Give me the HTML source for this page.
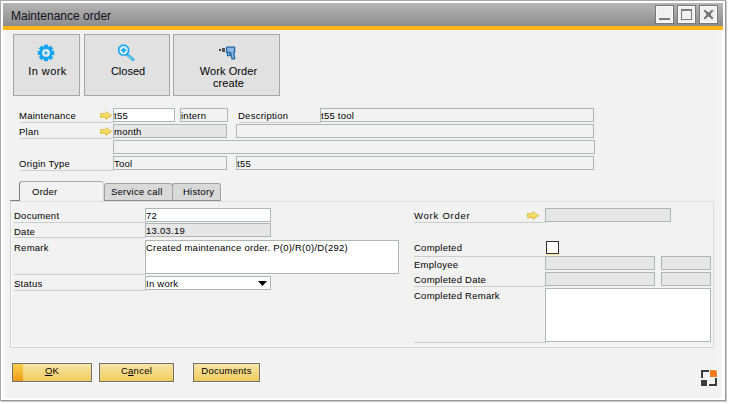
<!DOCTYPE html>
<html><head><meta charset="utf-8">
<style>
*{margin:0;padding:0;box-sizing:border-box}
html,body{width:729px;height:404px;overflow:hidden;background:#fff}
body{position:relative;font-family:"Liberation Sans",sans-serif;font-size:9.5px;letter-spacing:0.25px;color:#000}
.a{position:absolute}
#frame{left:0;top:0;width:726px;height:401px;border-left:1px solid #a8a8a8;border-top:1px solid #a8a8a8;border-right:1px solid #9a9a9a;border-bottom:1px solid #9a9a9a;box-shadow:1px 1px 0 #c8c8c8}
#title{left:3px;top:3px;width:720px;height:23px;background:linear-gradient(#b5b5b5,#8d8d8d)}
#title span{position:absolute;left:8px;top:6px;font-size:12px;letter-spacing:0;color:#101020}
#orange{left:3px;top:26px;width:720px;height:4px;background:#fdb515}
#content{left:3px;top:30px;width:719px;height:368px;background:#f2f2f2;box-shadow:inset 1px 0 #fafafa,inset 4px 0 #f5f5f5,inset -3px 0 #f4f4f4}
.wb{width:19px;height:19px;border:1px solid #787878;background:#f0f0f0;box-shadow:inset 0 0 0 1px #fafafa}
.tb{border:1px solid #a6a6a6;background:#e1e1e1;font-size:11px;text-align:center;color:#111}
.lbl{height:15px;line-height:16px;border-bottom:1px solid #cdcdcd;white-space:nowrap;text-indent:-1px}
.inp{height:14px;border:1px solid #b0b5b5;background:#f2f2f2;line-height:14px;padding-left:0;white-space:nowrap;overflow:hidden}
.w{background:#fff}
.g{background:#e6e6e6}
.tab{border:1px solid #a0a0a0;border-bottom:none;border-radius:3px 3px 0 0;text-align:center;line-height:14px}
.btn{height:19px;border:1px solid #6e6e6e;box-shadow:0 0 0 1px #fafafa;background:linear-gradient(#f7e4a8,#f1cd5c);text-align:center;line-height:14px}
</style></head><body>
<div class="a" id="frame"></div>
<div class="a" id="title"><span>Maintenance order</span></div>
<div class="a" id="orange"></div>
<div class="a" id="content"></div>

<!-- window buttons -->
<div class="a wb" style="left:655px;top:5px"></div>
<div class="a wb" style="left:677px;top:5px"></div>
<div class="a wb" style="left:699px;top:5px"></div>
<div class="a" style="left:659px;top:18px;width:11px;height:2px;background:#7a7a7a"></div>
<div class="a" style="left:681px;top:9px;width:11px;height:11px;border:1px solid #7a7a7a;border-top-width:2px"></div>
<svg class="a" style="left:703px;top:9px" width="11" height="11" viewBox="0 0 11 11"><path d="M1.8 1.8L9.2 9.2M9.2 1.8L1.8 9.2" stroke="#767676" stroke-width="2" stroke-linecap="round"/><rect x="3.2" y="3.2" width="4.6" height="4.6" fill="#767676"/></svg>

<!-- toolbar buttons -->
<div class="a tb" style="left:13px;top:34px;width:67px;height:62px"></div>
<div class="a tb" style="left:84px;top:34px;width:86px;height:62px"></div>
<div class="a tb" style="left:173px;top:34px;width:107px;height:62px"></div>
<div class="a" style="left:14px;top:65px;width:67px;text-align:center;font-size:11px;letter-spacing:0.4px">In work</div>
<div class="a" style="left:85px;top:65px;width:86px;text-align:center;font-size:11px;letter-spacing:0">Closed</div>
<div class="a" style="left:175px;top:65px;width:107px;text-align:center;font-size:11px;line-height:12px;letter-spacing:0.1px">Work Order<br>create</div>


<!-- icons -->
<svg class="a" style="left:37px;top:44px" width="18" height="18" viewBox="0 0 18 18">
<g fill="#12a5f4" transform="translate(9 8.9)">
<circle r="6.4"/>
<rect x="-2.1" y="-8.2" width="4.2" height="16.4"/>
<rect x="-2.1" y="-8.2" width="4.2" height="16.4" transform="rotate(45)"/>
<rect x="-2.1" y="-8.2" width="4.2" height="16.4" transform="rotate(90)"/>
<rect x="-2.1" y="-8.2" width="4.2" height="16.4" transform="rotate(135)"/>
</g>
<circle cx="9" cy="8.9" r="3.9" fill="#e3eaee"/>
<path d="M7.8 6.8L11 8.9L7.8 11Z" fill="#12a5f4"/>
</svg>
<svg class="a" style="left:116px;top:43px" width="20" height="20" viewBox="0 0 20 20">
<path d="M11.6 11.8L17 16.6" stroke="#2eb0f0" stroke-width="3" stroke-linecap="round"/>
<path d="M12.2 12.6L16.4 16.2" stroke="#c8ebfc" stroke-width="0.9"/>
<path d="M5.6 2.4H9.6L12.4 5.2V9.2L9.6 12H5.6L2.8 9.2V5.2Z" fill="#fff" stroke="#18a8f0" stroke-width="1.7" stroke-linejoin="round"/>
<path d="M7.6 4.4V10M4.8 7.2H10.4" stroke="#18a8f0" stroke-width="2"/>
</svg>
<svg class="a" style="left:218px;top:46px" width="20" height="15" viewBox="0 0 20 15">
<rect x="1" y="3" width="2" height="2" fill="#444"/>
<rect x="4" y="2" width="3" height="4" fill="#555"/>
<path d="M9.5 6.5V9.5H12V6.5" fill="none" stroke="#1c67a6" stroke-width="1.3"/><path d="M8.6 1.2H16.6V6.5H15.6L16.6 11.7V12.8H14L12.6 6.5H8.6Z" fill="#8fb8e4" stroke="#1c67a6" stroke-width="1.3" stroke-linejoin="round"/>
</svg>

<!-- header form -->
<div class="a lbl" style="left:20px;top:108px;width:94px">Maintenance</div>
<div class="a lbl" style="left:20px;top:124px;width:94px">Plan</div>
<div class="a lbl" style="left:20px;top:156px;width:94px">Origin Type</div>
<div class="a inp w" style="left:113px;top:108px;width:62px">t55</div>
<div class="a inp" style="left:180px;top:108px;width:48px">intern</div>
<div class="a lbl" style="left:239px;top:108px;width:82px">Description</div>
<div class="a inp" style="left:320px;top:108px;width:274px">t55 tool</div>
<div class="a inp g" style="left:113px;top:124px;width:114px">month</div>
<div class="a inp" style="left:236px;top:124px;width:358px"></div>
<div class="a inp" style="left:113px;top:140px;width:482px"></div>
<div class="a inp" style="left:113px;top:156px;width:114px">Tool</div>
<div class="a inp" style="left:236px;top:156px;width:358px">t55</div>

<svg class="a" style="left:99px;top:111px" width="14" height="10" viewBox="0 0 14 10"><defs><linearGradient id="ag1" x1="0" y1="0" x2="0" y2="1"><stop offset="0" stop-color="#f7eaa0"/><stop offset="1" stop-color="#f0d030"/></linearGradient></defs><path d="M1.5 2.6H7V0.6L12.6 4.5L7 8.4V6.4H1.5Z" fill="url(#ag1)" stroke="#dcc040" stroke-width="0.9" stroke-linejoin="round"/></svg>
<svg class="a" style="left:99px;top:127px" width="14" height="10" viewBox="0 0 14 10"><defs><linearGradient id="ag2" x1="0" y1="0" x2="0" y2="1"><stop offset="0" stop-color="#f7eaa0"/><stop offset="1" stop-color="#f0d030"/></linearGradient></defs><path d="M1.5 2.6H7V0.6L12.6 4.5L7 8.4V6.4H1.5Z" fill="url(#ag2)" stroke="#dcc040" stroke-width="0.9" stroke-linejoin="round"/></svg>
<svg class="a" style="left:526px;top:211px" width="14" height="10" viewBox="0 0 14 10"><defs><linearGradient id="ag3" x1="0" y1="0" x2="0" y2="1"><stop offset="0" stop-color="#f7eaa0"/><stop offset="1" stop-color="#f0d030"/></linearGradient></defs><path d="M1.5 2.6H7V0.6L12.6 4.5L7 8.4V6.4H1.5Z" fill="url(#ag3)" stroke="#dcc040" stroke-width="0.9" stroke-linejoin="round"/></svg>
<!-- tabs -->
<div class="a" style="left:10px;top:201px;width:704px;height:147px;border:1px solid #dcdcdc;border-left-color:#d2d2d2;border-bottom-color:#d2d2d2;box-shadow:inset 1px 0 #fafafa,inset 0 -1px #fafafa"></div>
<div class="a" style="left:10px;top:200px;width:10px;height:1px;background:#7c7c7c"></div>
<div class="a tab" style="left:104px;top:183px;width:69px;height:18px;background:#d9d9d9;border-bottom:1px solid #8c8c8c;text-align:left;padding-left:6px;line-height:15px">Service call</div>
<div class="a tab" style="left:172px;top:183px;width:49px;height:18px;background:#d9d9d9;border-bottom:1px solid #8c8c8c;text-align:left;padding-left:10px;line-height:15px">History</div>
<div class="a tab" style="left:19px;top:181px;width:85px;height:20px;background:#f2f2f2;border-left-color:#7c7c7c;border-right-color:#d4d4d4;border-top-color:#a8a8a8;text-align:left;padding-left:12px;line-height:20px">Order</div>
<!-- order tab left -->
<div class="a lbl" style="text-indent:0;left:14px;top:208px;width:132px">Document</div>
<div class="a lbl" style="text-indent:0;left:14px;top:224px;width:132px;height:14px">Date</div>
<div class="a lbl" style="text-indent:0;left:14px;top:240px;width:132px;height:35px">Remark</div>
<div class="a lbl" style="text-indent:0;left:14px;top:276px;width:132px;height:15px">Status</div>
<div class="a inp w" style="left:145px;top:208px;width:126px">72</div>
<div class="a inp g" style="left:145px;top:223px;width:126px">13.03.19</div>
<div class="a inp w" style="left:145px;top:240px;width:254px;height:34px">Created maintenance order. P(0)/R(0)/D(292)</div>
<div class="a inp w" style="left:145px;top:276px;width:126px">In work</div>

<!-- order tab right -->
<div class="a lbl" style="text-indent:0;left:414px;top:208px;width:132px;letter-spacing:0.75px">Work Order</div>
<div class="a inp g" style="left:545px;top:208px;width:126px"></div>
<div class="a lbl" style="text-indent:0;left:414px;top:241px;width:132px;height:16px;line-height:14px">Completed</div>
<div class="a lbl" style="text-indent:0;left:414px;top:257px;width:132px;border-bottom:none;line-height:15px">Employee</div>
<div class="a lbl" style="text-indent:0;left:414px;top:272px;width:132px">Completed Date</div>
<div class="a lbl" style="text-indent:0;left:414px;top:288px;width:132px;height:55px">Completed Remark</div>
<div class="a" style="left:546px;top:241px;width:13px;height:13px;border:1px solid #333;background:#fff"></div>
<div class="a" style="left:546px;top:254px;width:13px;height:1px;background:#f6e48c"></div>
<div class="a inp g" style="left:545px;top:256px;width:110px"></div>
<div class="a inp g" style="left:661px;top:256px;width:50px"></div>
<div class="a inp g" style="left:545px;top:272px;width:110px"></div>
<div class="a inp g" style="left:661px;top:272px;width:50px"></div>
<div class="a inp w" style="left:545px;top:288px;width:166px;height:54px"></div>

<!-- footer -->
<div class="a btn" style="left:12px;top:363px;width:80px"><u>O</u>K</div>
<div class="a" style="left:13px;top:364px;width:10px;height:17px;background:linear-gradient(#f8d048,#f09a1a)"></div>
<div class="a btn" style="left:99px;top:363px;width:75px">C<u>a</u>ncel</div>
<div class="a btn" style="left:193px;top:363px;width:67px">Documents</div>
<svg class="a" style="left:257px;top:280px" width="11" height="7" viewBox="0 0 11 7"><path d="M1 1H10L5.5 6Z" fill="#000"/></svg>
<svg class="a" style="left:699px;top:368px" width="20" height="20" viewBox="0 0 20 20">
<g fill="none" stroke="#fff" stroke-width="1" opacity="0.8"><rect x="1.5" y="1.5" width="9" height="9"/><rect x="10.5" y="1.5" width="8" height="8"/><rect x="1.5" y="11.5" width="7" height="7"/><rect x="9.5" y="9.5" width="9" height="9"/></g>
<path d="M2 2H10V4H4V10H2Z" fill="#3c3c3c"/>
<path d="M11 2H15.5A2.5 2.5 0 0 1 18 4.5V9H11Z" fill="#f37a1f"/>
<rect x="2" y="12" width="6" height="6" fill="#3c3c3c"/>
<path d="M16 10H18V18H10V16H16Z" fill="#3c3c3c"/>
</svg>
</body></html>
